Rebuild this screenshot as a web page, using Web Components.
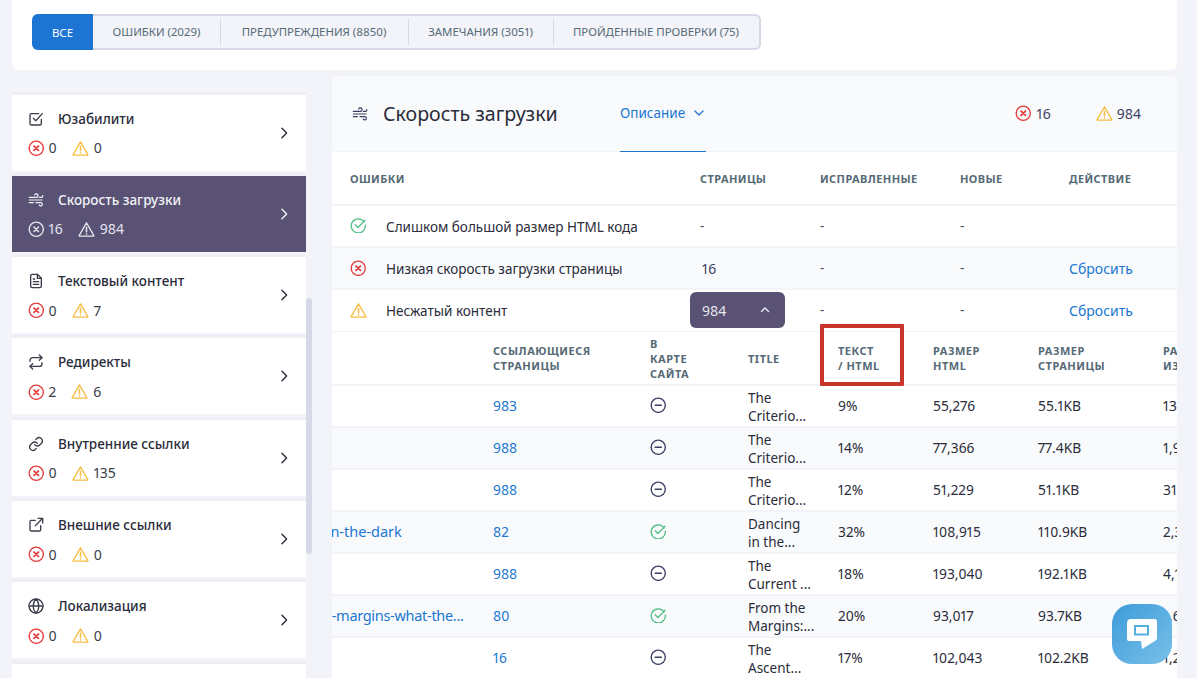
<!DOCTYPE html>
<html lang="ru"><head><meta charset="utf-8"><title>Скорость загрузки</title>
<style>
html,body{margin:0;height:678px;overflow:hidden;background:#f2f4f9;font-family:"Noto Sans","Liberation Sans",sans-serif;color:#2a2c3a;font-variant-numeric:proportional-nums}
</style></head><body>
<audit-page></audit-page>
<script>
const S=(w,h,b,vb)=>`<svg width="${w}" height="${h}" viewBox="${vb||'0 0 24 24'}" fill="none" stroke="currentColor" stroke-width="2" stroke-linecap="round" stroke-linejoin="round" style="display:block;flex:none">${b}</svg>`;
const I={
 err:(s=16.5,c='#e43d3d')=>`<span style="color:${c};display:block">${S(s,s,'<circle cx="12" cy="12" r="10.3"/><path d="M8.8 8.8l6.4 6.4M15.2 8.8l-6.4 6.4" stroke-width="2.6"/>')}</span>`,
 errw:(s=16.5)=>`<span style="color:#fff;opacity:.85;display:block">${S(s,s,'<circle cx="12" cy="12" r="10.3"/><path d="M8.8 8.8l6.4 6.4M15.2 8.8l-6.4 6.4" stroke-width="2.2"/>')}</span>`,
 warn:(s=17,c='#f9bc42')=>`<span style="color:${c};display:block">${S(s,s,'<path d="M12 2.6L1.6 20.6a.6.6 0 0 0 .5.9h19.8a.6.6 0 0 0 .5-.9z" stroke-width="1.8"/><path d="M12 9v6M12 18.2v.1" stroke-width="2.2"/>')}</span>`,
 ok:(s=16.5)=>`<span style="color:#4fbf85;display:block;margin-top:-2px">${S(s,s,'<path d="M20.6 7.2A10.3 10.3 0 1 0 22.3 12" stroke-width="1.9"/><path d="M7.6 11.2l4 4L22 4.6" stroke-width="1.9"/>')}</span>`,
 minus:(s=16.5)=>`<span style="color:#3b3e63;display:block;margin-top:-2px">${S(s,s,'<circle cx="12" cy="12" r="10.3"/><path d="M7.5 12h9"/>')}</span>`,
 wind:(s=16)=>S(s,s,'<path d="M2 8h10.5a2.6 2.6 0 1 0-2.4-3.6M2 12h19M2 16h6M12 16h7.2a2.4 2.4 0 1 1-2.2 3.4M17 8h3.4a1.8 1.8 0 0 0 1.6-2.6" stroke-width="1.8"/>'),
 usab:(s=16)=>S(s,s,'<path d="M20 12.5V19a2 2 0 0 1-2 2H5a2 2 0 0 1-2-2V6a2 2 0 0 1 2-2h11"/><path d="M8 11l3.6 3.6L21.5 4"/>'),
 doc:(s=16)=>S(s,s,'<path d="M14 2H6a2 2 0 0 0-2 2v16a2 2 0 0 0 2 2h12a2 2 0 0 0 2-2V8z"/><path d="M14 2v6h6M8 13h8M8 17h8M8 9h2"/>'),
 redir:(s=16)=>S(s,s,'<path d="M17 1.500l4 4-4 4"/><path d="M3 11V9.500a4 4 0 0 1 4-4h14M7 22.500l-4-4 4-4"/><path d="M21 13v1.500a4 4 0 0 1-4 4H3"/>'),
 link:(s=16)=>S(s,s,'<path d="M10 13a5 5 0 0 0 7.500.5l3-3a5 5 0 0 0-7-7l-1.700 1.700"/><path d="M14 11a5 5 0 0 0-7.500-.5l-3 3a5 5 0 0 0 7 7l1.700-1.700"/>'),
 ext:(s=16)=>S(s,s,'<path d="M11 5H5a2 2 0 0 0-2 2v12a2 2 0 0 0 2 2h12a2 2 0 0 0 2-2v-6"/><path d="M11 13L22 2M15 2h7v7"/>'),
 globe:(s=16)=>S(s,s,'<circle cx="12" cy="12" r="10.500"/><path d="M1.500 12h21M12 1.500c3 3 4.300 6.500 4.300 10.500S15 19.500 12 22.500C9 19.500 7.700 16 7.700 12S9 4.500 12 1.500z"/>'),
 chevR:()=>S(14,14,'<path d="M8.500 4l8 8-8 8" stroke-width="2.400"/>'),
 chevD:()=>S(14,14,'<path d="M5 8.500l7 7 7-7" stroke-width="2.200"/>'),
 chevU:()=>S(12,12,'<path d="M5 15l7-7 7 7" stroke-width="2.800"/>')
};
const define=(n,c)=>customElements.define(n,c);

class TabStrip extends HTMLElement{connectedCallback(){const r=this.attachShadow({mode:'open'});
 const t=[['ВСЕ',61],['ОШИБКИ (2029)',127],['ПРЕДУПРЕЖДЕНИЯ (8850)',188],['ЗАМЕЧАНИЯ (3051)',145],['ПРОЙДЕННЫЕ ПРОВЕРКИ (75)',206]];
 r.innerHTML=`<style>:host{display:inline-flex;height:36px;box-sizing:border-box;border:2px solid #d5d9e7;border-left:0;border-radius:6px;background:#f2f4f9;font-size:11.450px;color:#566a76}
 div{display:flex;align-items:center;justify-content:center;padding-bottom:2px;box-sizing:border-box;position:relative;white-space:nowrap}
 div+div+div::before{content:"";position:absolute;left:0;top:3px;bottom:3px;width:1px;background:#d5d9e7}
 .on{background:#1c75d3;color:#fff;margin:-2px 0;border-radius:6px 0 0 6px;padding-bottom:0}</style>`+t.map((x,i)=>`<div class="${i?'':'on'}" style="width:${x[1]}px">${x[0]}</div>`).join('');}}
define('tab-strip',TabStrip);

class TopCard extends HTMLElement{connectedCallback(){this.attachShadow({mode:'open'}).innerHTML=`<style>:host{display:block;background:#fff;height:70px;box-sizing:border-box;padding:14px 20px;margin:0 20px 0 12px;border-radius:0 0 6px 6px}</style><tab-strip></tab-strip>`;}}
define('top-card',TopCard);

class StatPair extends HTMLElement{connectedCallback(){const e=this.getAttribute('e'),w=this.getAttribute('w'),v=this.hasAttribute('inv');
 this.attachShadow({mode:'open'}).innerHTML=`<style>:host{display:flex;align-items:center;font-size:14px;line-height:20px;margin-left:-.5px;color:${v?'#e6e5ee':'#3a3c4a'}}span.n{margin:0 15px 0 4.500px}</style>${v?I.errw():I.err()}<span class="n">${e}</span>${v?I.warn(17,'rgba(255,255,255,.85)'):I.warn()}<span class="n" style="margin-left:5px;margin-right:0">${w}</span>`;}}
define('stat-pair',StatPair);

class SideItem extends HTMLElement{connectedCallback(){const on=this.hasAttribute('active');
 this.attachShadow({mode:'open'}).innerHTML=`<style>:host{display:flex;align-items:center;height:76px;flex:none;box-sizing:border-box;padding:0 15px 0 16px;background:${on?'#5a5275':'#fff'};color:${on?'#f2f2f6':'#2a2c3a'};box-shadow:0 -3px 0 #edeff5}
 .b{flex:1;display:flex;flex-direction:column;gap:9.500px;margin-top:1.500px}.t{display:flex;align-items:center;gap:15px;font-size:13.500px;font-weight:500;line-height:20px}
 .ic{width:15px;height:16px;display:flex;justify-content:center;color:${on?'#f2f2f6':'#3b3d4a'}}</style>
 <div class="b"><div class="t"><span class="ic">${I[this.getAttribute('icon')](16)}</span><span>${this.getAttribute('label')}</span></div>
 <stat-pair e="${this.getAttribute('e')}" w="${this.getAttribute('w')}" ${on?'inv':''}></stat-pair></div>${I.chevR()}`;}}
define('side-item',SideItem);

class SideBar extends HTMLElement{connectedCallback(){const d=[['usab','Юзабилити',0,0],['wind','Скорость загрузки',16,984,1],['doc','Текстовый контент',0,7],['redir','Редиректы',2,6],['link','Внутренние ссылки',0,135],['ext','Внешние ссылки',0,0],['globe','Локализация',0,0]];
 this.attachShadow({mode:'open'}).innerHTML=`<style>:host{display:flex;flex-direction:column;gap:5.300px;width:294px;flex:none;padding-top:18.600px;position:relative}
 .sb{position:absolute;left:294px;top:222px;width:6px;height:256px;background:#d6d9e6;border-radius:3px}.last{height:76px;background:#fff;flex:none;box-shadow:0 -3px 0 #edeff5}</style>`+d.map(x=>`<side-item icon="${x[0]}" label="${x[1]}" e="${x[2]}" w="${x[3]}" ${x[4]?'active':''}></side-item>`).join('')+`<div class="last"></div><div class="sb"></div>`;}}
define('side-bar',SideBar);

class PanelHead extends HTMLElement{connectedCallback(){this.attachShadow({mode:'open'}).innerHTML=`<style>:host{display:flex;align-items:center;height:76px;box-sizing:border-box;background:#f9fafc;padding:0 36px 0 20px;border-bottom:1px solid #f0f2f7;color:#2a2c3a}
 .w{color:#3b3e63;width:31px}h1{margin:0;font-size:19.600px;font-weight:400;width:237px;white-space:nowrap}
 .d{height:76px;box-sizing:border-box;width:86px;display:flex;align-items:center;gap:7px;font-size:13.500px;color:#2077d2;border-bottom:1.500px solid #2077d2}
 .r{margin-left:auto;display:flex;align-items:center;font-size:14px;color:#3b3e63}.r span.n{margin:0 45px 0 5px}.r span.l{margin:0 0 0 4px}</style>
 <span class="w">${I.wind(16)}</span><h1>Скорость загрузки</h1><div class="d"><span>Описание</span>${I.chevD()}</div>
 <div class="r">${I.err()}<span class="n">16</span>${I.warn()}<span class="l">984</span></div>`;}}
define('panel-head',PanelHead);

const gridCols='350px 120px 140px 109px 108px';
class IssueTable extends HTMLElement{connectedCallback(){
 const rows=[[I.ok(),'Слишком большой размер HTML кода','-','-','-',''],[I.err(),'Низкая скорость загрузки страницы','16','-','-','Сбросить'],[I.warn(),'Несжатый контент','btn','-','-','Сбросить']];
 this.attachShadow({mode:'open'}).innerHTML=`<style>:host{display:block;font-size:13.500px}
 .row{display:grid;grid-template-columns:${gridCols};align-items:center;height:42px;box-sizing:border-box;border-bottom:2px solid #f2f4f9;padding-left:18px;background:#fff;white-space:nowrap}
 .row.alt{background:#f9fafc}.head{height:54px;font-size:11px;font-weight:700;letter-spacing:.4px;color:#566a76}
 .nm{display:flex;align-items:center;gap:20px}.nm>span:first-child{width:16px}.nm>span:last-child{margin-top:2px}.d{color:#4d4f66}.p{padding-left:2px;color:#3b3e63;font-size:14px}.a{color:#2077d2;font-size:14px}
 .btn{position:absolute;left:-10px;top:-18px;width:95px;height:36px;border-radius:6px;background:#5a5275;color:#e9e8ef;display:flex;align-items:center;justify-content:space-between;padding:0 14px 0 12px;box-sizing:border-box;z-index:1;font-size:14px}
 .c{position:relative}.row:last-child{border-bottom-width:1px;padding-bottom:1px}</style>
 <div class="row head"><span>ОШИБКИ</span><span>СТРАНИЦЫ</span><span>ИСПРАВЛЕННЫЕ</span><span>НОВЫЕ</span><span>ДЕЙСТВИЕ</span></div>`+
 rows.map((x,i)=>`<div class="row ${i==1?'alt':''}"><span class="nm">${x[0]}<span>${x[1]}</span></span><span class="c">${x[2]=='btn'?`<span class="btn"><span>984</span>${I.chevU()}</span>`:`<span class="${x[2]=='-'?'d':'p'}">${x[2]}</span>`}</span><span class="d">${x[3]}</span><span class="d">${x[4]}</span><span class="a">${x[5]}</span></div>`).join('');}}
define('issue-table',IssueTable);

class PageTable extends HTMLElement{connectedCallback(){
 const T=[['','983',0,'The<br>Criterio...','9%','55,276','55.1KB','13,1KB'],['','988',0,'The<br>Criterio...','14%','77,366','77.4KB','1,9KB'],['','988',0,'The<br>Criterio...','12%','51,229','51.1KB','31KB'],['/dancing-in-the-dark','82',1,'Dancing<br>in the...','32%','108,915','110.9KB','2,3KB','margin-left:-4px'],['','988',0,'The<br>Current ...','18%','193,040','192.1KB','4,1KB'],['/from-the-margins-what-the...','80',1,'From the<br>Margins:...','20%','93,017','93.7KB','1,6KB','margin-left:3px;letter-spacing:-.3px'],['','16',0,'The<br>Ascent...','17%','102,043','102.2KB','1,2KB']];
 const cols='227px 157px 98px 90px 95px 105px 125px 80px';
 this.attachShadow({mode:'open'}).innerHTML=`<style>:host{display:block;font-size:13.800px;position:relative;height:346px}
 .clip{overflow:hidden;height:346px}.in{margin-left:-66px;width:980px}
 .row{display:grid;grid-template-columns:${cols};align-items:center;height:42px;box-sizing:border-box;border-bottom:2px solid #f2f4f9;background:#fff;line-height:18px}
 .row:nth-child(odd){background:#f9fafc}
 .head{height:54px;font-size:11px;font-weight:700;letter-spacing:.5px;color:#566a76;line-height:15px;background:#fff!important}
 .u{color:#2077d2;white-space:nowrap;font-size:14.500px;margin-top:-2px}.l{color:#2077d2}.ti{margin-top:2px;font-size:13.500px}
 .mark{position:absolute;left:488px;top:-8px;width:84px;height:62px;box-sizing:border-box;border:4px solid #c8352b;border-radius:1px;pointer-events:none}
 .off{overflow:hidden;white-space:nowrap}</style><div class="clip"><div class="in">
 <div class="row head"><span></span><span>ССЫЛАЮЩИЕСЯ<br>СТРАНИЦЫ</span><span>В<br>КАРТЕ<br>САЙТА</span><span>TITLE</span><span>ТЕКСТ<br>/ HTML</span><span>РАЗМЕР<br>HTML</span><span>РАЗМЕР<br>СТРАНИЦЫ</span><span>РАЗМЕР<br>ИЗОБРАЖЕНИЙ</span></div>`+
 T.map(x=>`<div class="row"><span class="u" style="${x[8]||''}">${x[0]}</span><span class="l">${x[1]}</span><span>${x[2]?I.ok():I.minus()}</span><span class="ti">${x[3]}</span><span>${x[4]}</span><span>${x[5]}</span><span>${x[6]}</span><span class="off">${x[7]}</span></div>`).join('')+`</div></div><div class="mark"></div>`;}}
define('page-table',PageTable);

class ChatButton extends HTMLElement{connectedCallback(){this.attachShadow({mode:'open'}).innerHTML=`<style>:host{position:absolute;left:1112px;top:604px;width:60px;height:60px;border-radius:20px;background:linear-gradient(135deg,#3d9cdb,#79c0e8);display:flex;align-items:center;justify-content:center}</style>
 <svg width="30" height="30" viewBox="0 0 30 30"><path d="M4 0h24a2 2 0 0 1 2 2v18l-2 2L15 30l-1-8H2a2 2 0 0 1-2-2V4a4 4 0 0 1 4-4z" fill="#fff"/><rect x="8" y="7" width="13" height="8.500" fill="none" stroke="#55aee0" stroke-width="2"/></svg>`;}}
define('chat-button',ChatButton);

class AuditPage extends HTMLElement{connectedCallback(){this.attachShadow({mode:'open'}).innerHTML=`<style>:host{display:block;height:678px;overflow:hidden;position:relative}
 .cols{display:flex;margin:6px 20px 0 12px;gap:26px}
 main{flex:1;min-width:0;background:#fff;border-radius:6px 6px 0 0;overflow:hidden;height:602px}</style>
 <top-card></top-card><div class="cols"><side-bar></side-bar><main><panel-head></panel-head><issue-table></issue-table><page-table></page-table></main></div><chat-button></chat-button>`;}}
define('audit-page',AuditPage);
</script></body></html>
